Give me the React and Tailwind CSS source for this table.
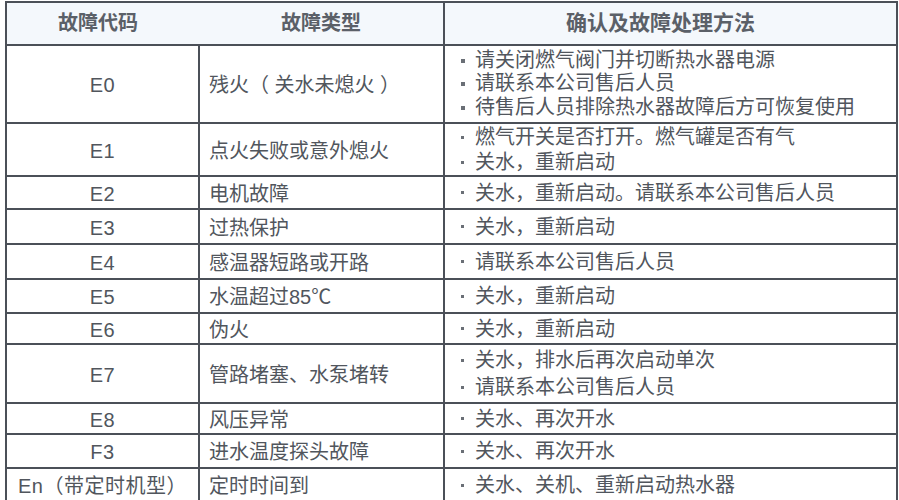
import React from "react";

const rows = [
  { code: "E0", type: "残火（ 关水未熄火 ）", h: 78, lh: "leading-[23.5px]", items: ["请关闭燃气阀门并切断热水器电源", "请联系本公司售后人员", "待售后人员排除热水器故障后方可恢复使用"], sq: true },
  { code: "E1", type: "点火失败或意外熄火", h: 53, lh: "leading-[25px]", items: ["燃气开关是否打开。燃气罐是否有气", "关水，重新启动"] },
  { code: "E2", type: "电机故障", h: 33, lh: "leading-[24px]", items: ["关水，重新启动。请联系本公司售后人员"] },
  { code: "E3", type: "过热保护", h: 35, lh: "leading-[24px]", items: ["关水，重新启动"] },
  { code: "E4", type: "感温器短路或开路", h: 35, lh: "leading-[24px]", items: ["请联系本公司售后人员"] },
  { code: "E5", type: "水温超过85℃", h: 34, lh: "leading-[24px]", items: ["关水，重新启动"] },
  { code: "E6", type: "伪火", h: 31, lh: "leading-[24px]", items: ["关水，重新启动"] },
  { code: "E7", type: "管路堵塞、水泵堵转", h: 59, lh: "leading-[27px]", items: ["关水，排水后再次启动单次", "请联系本公司售后人员"] },
  { code: "E8", type: "风压异常", h: 31, lh: "leading-[24px]", items: ["关水、再次开水"] },
  { code: "F3", type: "进水温度探头故障", h: 34, lh: "leading-[24px]", items: ["关水、再次开水"] },
  { code: "En（带定时机型）", type: "定时时间到", h: 34, lh: "leading-[24px]", items: ["关水、关机、重新启动热水器"] },
];

export default function App() {
  return (
    <div
      className="w-[899px] h-[500px] overflow-hidden bg-white pt-[1px] pl-[5px] text-[#51565d]"
      style={{ fontFamily: '"Liberation Sans", "Noto Sans CJK SC", sans-serif' }}
    >
      <table className="border-collapse w-[893px] table-fixed">
        <colgroup>
          <col className="w-[193px]" />
          <col className="w-[245px]" />
          <col />
        </colgroup>
        <thead>
          <tr className="h-[43px] bg-[#f4f8fc]">
            <th className="border-2 border-[#4b5058] border-r-0 font-bold text-[20px] text-[#5b6068] text-center pb-[2px] pr-[10px]">故障代码</th>
            <th className="border-2 border-[#4b5058] border-l-0 font-bold text-[20px] text-[#5b6068] text-center pb-[2px]">故障类型</th>
            <th className="border-2 border-[#4b5058] font-bold text-[21px] text-[#5b6068] text-center pb-[2px] pr-[20px]">确认及故障处理方法</th>
          </tr>
        </thead>
        <tbody>
          {rows.map((r) => (
            <tr key={r.code} style={{ height: r.h }}>
              <td className="border-2 border-[#4b5058] text-center text-[20px] leading-[24px] p-0 pt-[2px] whitespace-nowrap tracking-[0.5px]">{r.code}</td>
              <td className="border-2 border-[#4b5058] text-[20px] leading-[24px] pl-[9px] pt-[2px] p-0 whitespace-pre">{r.type}</td>
              <td className={"border-2 border-[#4b5058] text-[20px] pl-[16px] p-0 " + r.lh}>
                {r.items.map((t, i) => (
                  <div key={i} className="flex items-center">
                    <span
                      className={
                        r.sq
                          ? "inline-block w-[4px] h-[4px] bg-[#6a6f76] mr-[10px]"
                          : "inline-block w-[3px] h-[3px] bg-[#6a6f76] mr-[11px]"
                      }
                    />
                    <span>{t}</span>
                  </div>
                ))}
              </td>
            </tr>
          ))}
        </tbody>
      </table>
    </div>
  );
}
